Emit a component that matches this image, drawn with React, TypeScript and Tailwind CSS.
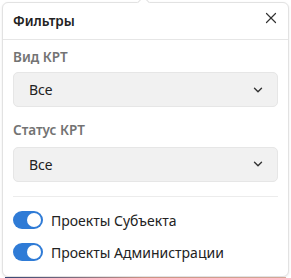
import { ChevronDown, X } from 'lucide-react'

const font = { fontFamily: '"Noto Sans", "Open Sans", Arial, sans-serif' }

function Select({ value }: { value: string }) {
  return (
    <div className="mx-[10px] flex h-[35px] items-center justify-between rounded-[5px] border border-[#e6e6e6] bg-[#f1f1f1] pl-[15px] pr-[12px]">
      <span className="text-[14px] text-[#222]">{value}</span>
      <ChevronDown size={14} strokeWidth={2.4} className="text-[#333]" />
    </div>
  )
}

function Toggle({ label }: { label: string }) {
  return (
    <div className="flex items-center gap-[8px] px-[10px]">
      <div className="flex h-[18px] w-[30px] items-center justify-end rounded-full bg-[#2f7bd6] pr-[2px]">
        <div className="h-[14px] w-[14px] rounded-full bg-white" />
      </div>
      <span className="text-[14px] text-[#222]">{label}</span>
    </div>
  )
}

export default function App() {
  return (
    <div className="relative h-[278px] w-[291px] bg-white" style={font}>
      <div className="relative mx-[2px] mt-[2px] h-[275px] rounded-[6px] border border-[#e2e2e2] bg-white shadow-[0_1px_3px_rgba(0,0,0,0.08)]">
        {/* arrow */}
        <div className="absolute left-[136px] top-[-5px] h-[9px] w-[9px] rotate-45 border-l border-t border-[#e2e2e2] bg-white" />
        <div className="flex h-[37px] items-center justify-between border-b border-[#e6e6e6] px-[10px]">
          <span className="text-[13.5px] font-semibold text-[#222]">Фильтры</span>
          <X size={18} strokeWidth={1.6} className="-mr-[2px] mb-[6px] text-[#333]" />
        </div>
        <div className="px-[10px] pt-[7px] text-[13.5px] font-semibold text-[#737373]">Вид КРТ</div>
        <div className="mt-[5px]">
          <Select value="Все" />
        </div>
        <div className="px-[10px] pt-[13px] text-[13.5px] font-semibold text-[#737373]">Статус КРТ</div>
        <div className="mt-[6px]">
          <Select value="Все" />
        </div>
        <div className="mx-[10px] mt-[14px] border-t border-[#ececec]" />
        <div className="mt-[13px] flex flex-col gap-[11px]">
          <Toggle label="Проекты Субъекта" />
          <Toggle label="Проекты Администрации" />
        </div>
      </div>
      <div className="mx-[5px] h-[1px] bg-gradient-to-r from-[#3a4a7a] via-[#d89a8a] to-[#e0b0a0]" />
    </div>
  )
}
